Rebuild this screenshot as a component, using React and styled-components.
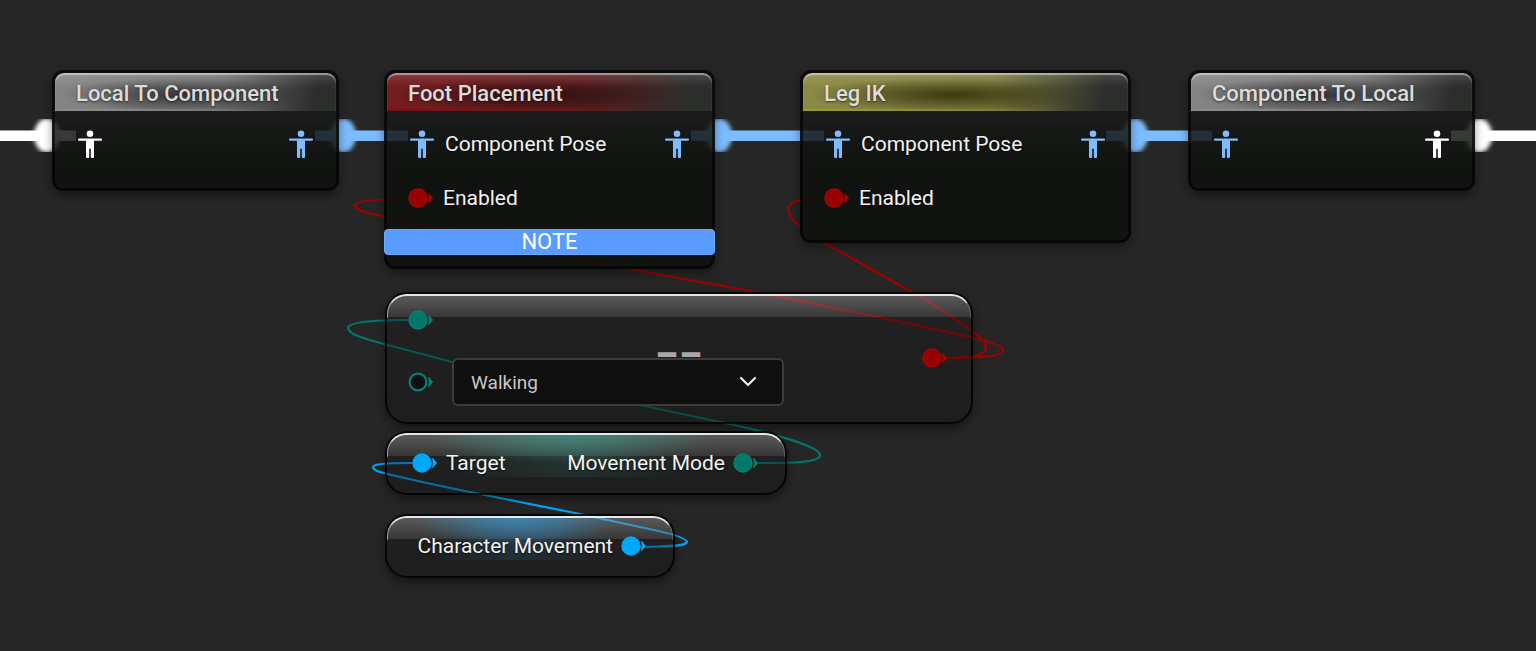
import React, { useState } from 'react'
import styled, { createGlobalStyle } from 'styled-components'

const BLUE = '#7dbcff'
const WHITE = '#ffffff'
const RED = '#960000'
const TEAL = '#00776a'
const SKY = '#00a8f8'

const GRAY_HEADER = { from: '#858585', mid: '#747474', edge: '#8c8c8c', shade: 'rgba(40, 40, 40, 0.85)' }
const RED_HEADER = { from: '#761c1e', mid: '#621c1e', edge: '#7c1012', shade: 'rgba(30, 14, 14, 0.8)' }
const OLIVE_HEADER = { from: '#8b8a45', mid: '#7c7c40', edge: '#9a9a32', shade: 'rgba(52, 50, 10, 0.9)' }

function PoseIcon({ color }) {
  return (
    <svg width="28" height="28" viewBox="0 0 28 28" fill={color} aria-hidden="true">
      <circle cx="14" cy="3.8" r="3.3" />
      <rect x="2" y="8.6" width="24" height="2.2" rx="1" />
      <path d="M10 9h8v18a1 1 0 0 1-1 1h-1.2a1 1 0 0 1-1-1v-8.2h-1.6V27a1 1 0 0 1-1 1H11a1 1 0 0 1-1-1z" />
    </svg>
  )
}

function Pin({ color, edge, hollow }) {
  return (
    <svg width="26" height="20" viewBox="0 0 26 20" aria-hidden="true">
      <circle cx="10" cy="10" r={hollow ? 8.4 : 8.9} fill={hollow ? '#0c1110' : color} stroke={edge || color} strokeWidth={hollow ? 2.2 : 1.6} />
      <path d="M20.6 5.2L24.6 10L20.6 14.8Q22 10 20.6 5.2z" fill={edge || color} stroke={edge || color} strokeWidth="0.9" />
    </svg>
  )
}

// thick pose link: bar plus a soft round cap where it leaves or enters a node
function PoseWire({ from, to, capAt, color }) {
  return (
    <g fill={color}>
      <rect x={from} y="130.5" width={to - from} height="10.5" />
      <g clipPath="url(#cap-band)">
        <ellipse cx={capAt} cy="135.5" rx="13" ry="17" filter="url(#cap-soft)" />
      </g>
    </g>
  )
}

function Wires() {
  return (
    <WireLayer aria-hidden="true">
      <defs>
        <filter id="cap-soft" x="-40%" y="-40%" width="180%" height="180%">
          <feGaussianBlur stdDeviation="2" />
        </filter>
        <clipPath id="cap-band">
          <rect x="0" y="119" width="100%" height="33" />
        </clipPath>
      </defs>
      <PoseWire from={0} to={76} capAt={47} color={WHITE} />
      <PoseWire from={315} to={408} capAt={343} color={BLUE} />
      <PoseWire from={691} to={824} capAt={719} color={BLUE} />
      <PoseWire from={1106} to={1212} capAt={1135} color={BLUE} />
      <PoseWire from={1451} to={4000} capAt={1479} color={WHITE} />
      <g fill="none" strokeWidth="2.2">
        <path stroke="#a00000" d="M408 199C384 199 357 200 355 205C355 211 370 213 384 216.500C440 231 500 243 570 257L640 271L750 291C830 307 900 321 965 336C985 340 1003 345 1003 351C1003 357 975 358 946 358" />
        <path stroke="#a00000" d="M824 199C806 199 788 199 788 210C788 219 808 233 825 243C838 251 845 254 855 260L910 291C935 305 955 318 970 330C980 337 986 342 986 348C986 357 965 358 946 358" />
        <path stroke={TEAL} d="M408 320C384 320 352 321 348 327C348 335 366 339 384 344L452 362C520 379 590 396 645 406L715 421C765 431 820 446 820 455C820 463 790 463 757 463" />
        <path stroke={SKY} d="M412 463C395 463 373 463 373 467C373 471 380 472 384 473C415 481 445 487 475 493L575 513L640 527C670 533 687 538 687 542C685 547 665 546 646 547" />
      </g>
    </WireLayer>
  )
}

function PoseNode({ title, header, x, width, height, input, output, poseLabel, enabled, note }) {
  return (
    <Node $x={x} $y={70} $width={width} $height={height}>
      <Header $c={header}>{title}</Header>
      <Row>
        <PoseIcon color={input} />
        <Label>{poseLabel}</Label>
        <PoseIcon color={output} />
      </Row>
      {enabled && (
        <Row>
          <Pin color={RED} edge="#ad0000" />
          <Label>Enabled</Label>
        </Row>
      )}
      {note && <Note>{note}</Note>}
    </Node>
  )
}

export default function App() {
  const [mode, setMode] = useState('Walking')

  return (
    <>
      <GlobalStyle />
      <Graph>
        <Wires />
        <PoseNode title="Local To Component" header={GRAY_HEADER} x={52} width={287} height={121} input={WHITE} output={BLUE} />
        <PoseNode title="Foot Placement" header={RED_HEADER} x={384} width={331} height={199} input={BLUE} output={BLUE} poseLabel="Component Pose" enabled note="NOTE" />
        <PoseNode title="Leg IK" header={OLIVE_HEADER} x={800} width={331} height={173} input={BLUE} output={BLUE} poseLabel="Component Pose" enabled />
        <PoseNode title="Component To Local" header={GRAY_HEADER} x={1188} width={287} height={121} input={BLUE} output={WHITE} />

        <GlossNode $x={385} $y={292} $width={588} $height={132}>
          <Operator>==</Operator>
          <CompareInputs>
            <Pin color={TEAL} edge="#078072" />
            <span />
            <Pin color={TEAL} edge="#078072" hollow />
            <SelectBox>
              <ModeSelect aria-label="Movement mode" value={mode} onChange={(e) => setMode(e.target.value)}>
                <option>Walking</option>
                <option>Falling</option>
                <option>Swimming</option>
                <option>Flying</option>
              </ModeSelect>
              <Chevron width="18" height="12" viewBox="0 0 18 12" aria-hidden="true">
                <path d="M2 2l7 7l7-7" fill="none" stroke="#eee" strokeWidth="2.2" strokeLinecap="round" />
              </Chevron>
            </SelectBox>
          </CompareInputs>
          <CompareOutput>
            <Pin color={RED} edge="#ad0000" />
          </CompareOutput>
        </GlossNode>

        <GlossNode $x={385} $y={431} $width={402} $height={64} $glow="60, 150, 135">
          <VariableRow>
            <Pin color={SKY} />
            <Label>Target</Label>
            <Label $end>Movement Mode</Label>
            <Pin color={TEAL} edge="#078072" />
          </VariableRow>
        </GlossNode>

        <GlossNode $x={385} $y={514} $width={290} $height={64} $glow="50, 150, 210">
          <VariableRow>
            <Label $end>Character Movement</Label>
            <Pin color={SKY} />
          </VariableRow>
        </GlossNode>
      </Graph>
    </>
  )
}

const GlobalStyle = createGlobalStyle`
  * {
    box-sizing: border-box;
  }
  body {
    margin: 0;
    background: #262626;
    color: #f2f2f2;
    font-family: Roboto, 'Liberation Sans', sans-serif;
  }
`

const Graph = styled.main`
  position: relative;
  min-height: 100vh;
  overflow: hidden;
`

const WireLayer = styled.svg`
  position: absolute;
  inset: 0;
  width: 100%;
  height: 100%;
`

const Node = styled.section`
  position: absolute;
  left: ${({ $x }) => $x}px;
  top: ${({ $y }) => $y}px;
  width: ${({ $width }) => $width}px;
  min-height: ${({ $height }) => $height}px;
  border: 3px solid rgba(0, 0, 0, 0.6);
  border-radius: 11px;
  background: linear-gradient(rgba(26, 28, 26, 0.84) 35px, rgba(13, 16, 13, 0.86) 100px) border-box;
  box-shadow: 0 4px 10px rgba(0, 0, 0, 0.4);
`

const Header = styled.h2`
  height: 38px;
  margin: 0 0 6px;
  padding: 0 21px;
  border-radius: 9px 9px 0 0;
  background:
    linear-gradient(rgba(255, 255, 255, 0.14), transparent 14px),
    linear-gradient(to right, ${({ $c }) => $c.edge}, transparent 80%) bottom / 100% 2px no-repeat,
    radial-gradient(ellipse 44% 46% at 46% 58%, ${({ $c }) => $c.shade}, transparent),
    linear-gradient(100deg, ${({ $c }) => $c.from}, ${({ $c }) => $c.mid} 58%, #2c2e2c 92%);
  box-shadow: inset 0 2px 1px rgba(255, 255, 255, 0.45);
  color: #dcdcdc;
  font-size: 22px;
  font-weight: 500;
  line-height: 41px;
  white-space: nowrap;
  text-shadow: 0 1px 2px rgba(0, 0, 0, 0.5);
`

const Row = styled.div`
  display: flex;
  align-items: center;
  gap: 9px;
  height: 54px;
  padding: 0 21px;
`

const Label = styled.span`
  flex: 1;
  font-size: 21px;
  line-height: 28px;
  white-space: nowrap;
  text-align: ${({ $end }) => ($end ? 'right' : 'left')};
  text-shadow: 0 1px 2px rgba(0, 0, 0, 0.7);
`

const Note = styled.div`
  margin: 4px -3px 0;
  border: 1px solid #69aaff;
  border-radius: 4px;
  background: #5a9bff;
  color: #fff;
  font-size: 22px;
  line-height: 24px;
  text-align: center;
`

const GlossNode = styled.section`
  position: absolute;
  left: ${({ $x }) => $x}px;
  top: ${({ $y }) => $y}px;
  display: flex;
  width: ${({ $width }) => $width}px;
  min-height: ${({ $height }) => $height}px;
  border: 2px solid rgba(0, 0, 0, 0.8);
  border-radius: 22px;
  background:
    ${({ $glow }) => $glow && `radial-gradient(ellipse 36% 30px at 46% 0, rgba(${$glow}, 0.65), transparent) top / 100% 44px no-repeat padding-box,
    radial-gradient(ellipse 34% 90px at 46% 0, rgba(${$glow}, 0.24), transparent) top / 100% 44px no-repeat padding-box,`}
    linear-gradient(rgba(255, 255, 255, 0.27), rgba(255, 255, 255, 0.1)) top / 100% 23px no-repeat padding-box,
    linear-gradient(rgba(24, 24, 24, 0.28), rgba(14, 17, 14, 0.4)) border-box;
  box-shadow: 0 4px 9px rgba(0, 0, 0, 0.45);

  &::before {
    content: '';
    position: absolute;
    inset: 0 0 auto;
    height: 22px;
    border: solid transparent;
    border-width: 2px 1px 0;
    border-color: rgba(255, 255, 255, 0.85) rgba(255, 255, 255, 0.2) transparent rgba(255, 255, 255, 0.5);
    border-radius: 20px 20px 0 0;
    pointer-events: none;
  }
`

const Operator = styled.span`
  position: absolute;
  inset: 0;
  display: flex;
  align-items: center;
  justify-content: center;
  color: #a8a8a8;
  font-size: 42px;
  font-weight: 700;
`

const CompareInputs = styled.div`
  position: relative;
  display: grid;
  grid-template-columns: 26px 332px;
  grid-template-rows: 51px 48px;
  gap: 13px 18px;
  flex: 1;
  align-items: center;
  padding: 0 0 16px 21px;
`

const SelectBox = styled.div`
  display: grid;
  align-items: center;
`

const ModeSelect = styled.select`
  grid-area: 1 / 1;
  height: 48px;
  padding: 0 17px;
  appearance: none;
  border: 2px solid #3c3c3c;
  border-radius: 6px;
  background: #0f0f0f;
  color: #c8c8c8;
  font-family: inherit;
  font-size: 19px;
`

const Chevron = styled.svg`
  grid-area: 1 / 1;
  justify-self: end;
  margin-right: 27px;
  pointer-events: none;
`

const CompareOutput = styled.div`
  display: flex;
  align-items: center;
  padding-right: 23px;
`

const VariableRow = styled.div`
  position: relative;
  display: flex;
  flex: 1;
  align-items: center;
  gap: 8px;
  padding: 0 26px 0 25px;
`
